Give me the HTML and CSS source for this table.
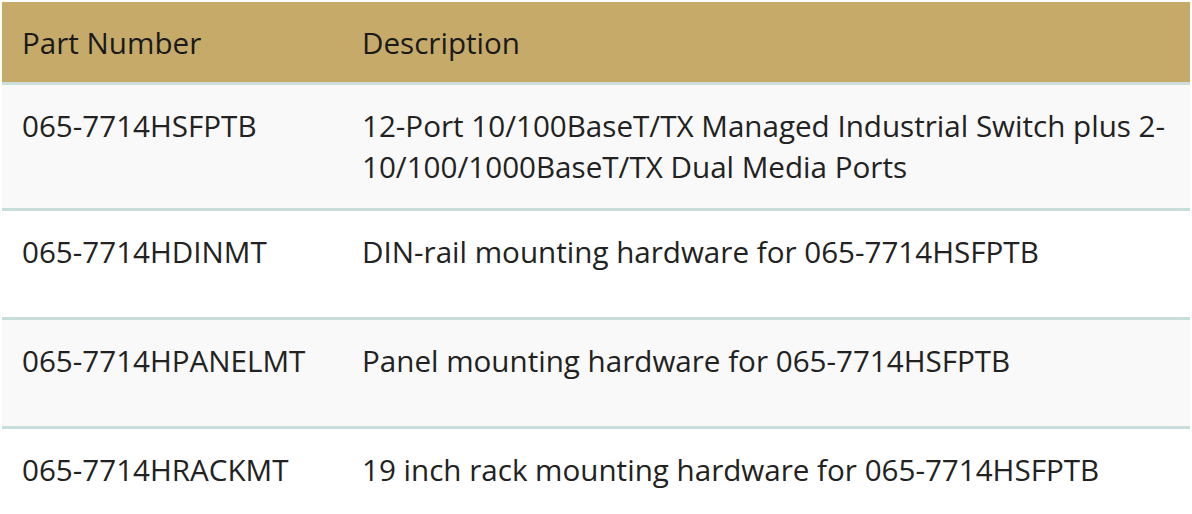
FILE: index.html
```html
<!DOCTYPE html>
<html>
<head>
<meta charset="utf-8">
<link rel="stylesheet" href="styles.css">
</head>
<body>
<table class="parts">
  <thead>
    <tr>
      <th class="col-part">Part Number</th>
      <th class="col-desc">Description</th>
    </tr>
  </thead>
  <tbody>
    <tr>
      <td>065-7714HSFPTB</td>
      <td>12-Port 10/100BaseT/TX Managed Industrial Switch plus 2-10/100/1000BaseT/TX Dual Media Ports</td>
    </tr>
    <tr>
      <td>065-7714HDINMT</td>
      <td>DIN-rail mounting hardware for 065-7714HSFPTB</td>
    </tr>
    <tr>
      <td>065-7714HPANELMT</td>
      <td>Panel mounting hardware for 065-7714HSFPTB</td>
    </tr>
    <tr>
      <td>065-7714HRACKMT</td>
      <td>19 inch rack mounting hardware for 065-7714HSFPTB</td>
    </tr>
  </tbody>
</table>
</body>
</html>
```
FILE: styles.css
```css
html, body {
  margin: 0;
  padding: 0;
  background: #ffffff;
}
body {
  padding: 2px;
  font-family: "Open Sans", "Liberation Sans", sans-serif;
  font-size: 29.6px;
  line-height: 41px;
  color: #222222;
}
.parts {
  width: 1188px;
  border-collapse: separate;
  border-spacing: 0;
  table-layout: fixed;
}
.col-part {
  width: 300px;
}
.parts th,
.parts td {
  text-align: left;
  vertical-align: top;
  padding: 20px 20px 21px;
}
.parts th {
  background: #c6aa6a;
  font-weight: 400;
  color: #1a1a1a;
  padding-bottom: 19px;
  border-bottom: 3px solid #cddfdc;
}
.parts td {
  border-bottom: 3px solid #c9dedb;
}
.parts tbody tr {
  height: 109px;
}
.parts tbody tr:nth-child(odd) td {
  background: #f9f9f9;
}
.parts tbody tr:nth-child(even) td {
  background: #ffffff;
}
```
